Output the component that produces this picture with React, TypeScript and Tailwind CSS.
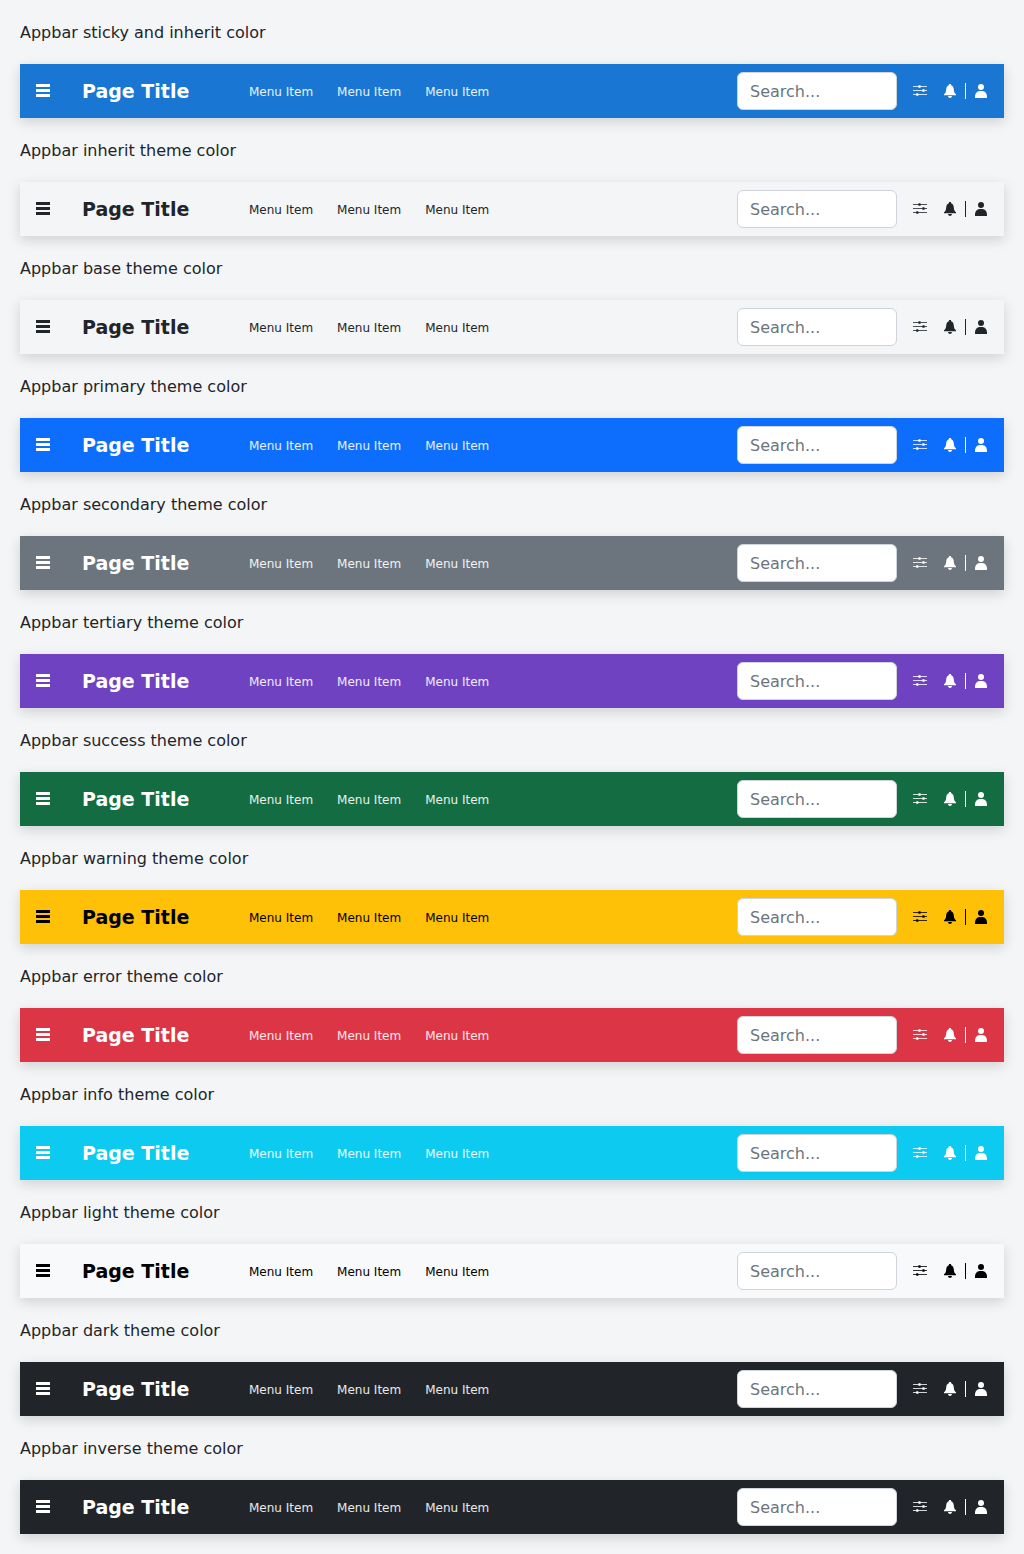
const bars = [
  { label: "Appbar sticky and inherit color", bar: "bg-[#1976d2]", text: "text-white", menu: "text-white/90" },
  { label: "Appbar inherit theme color", bar: "bg-[#f4f5f7]", text: "text-[#212529]", menu: "text-[#212529]" },
  { label: "Appbar base theme color", bar: "bg-[#f4f5f7]", text: "text-[#212529]", menu: "text-[#212529]" },
  { label: "Appbar primary theme color", bar: "bg-[#0d6efd]", text: "text-white", menu: "text-white/90" },
  { label: "Appbar secondary theme color", bar: "bg-[#6c757d]", text: "text-white", menu: "text-white/90" },
  { label: "Appbar tertiary theme color", bar: "bg-[#6f42c1]", text: "text-white", menu: "text-white/90" },
  { label: "Appbar success theme color", bar: "bg-[#146c43]", text: "text-white", menu: "text-white/90" },
  { label: "Appbar warning theme color", bar: "bg-[#ffc107]", text: "text-black", menu: "text-black" },
  { label: "Appbar error theme color", bar: "bg-[#dc3545]", text: "text-white", menu: "text-white/90" },
  { label: "Appbar info theme color", bar: "bg-[#0dcaf0]", text: "text-white", menu: "text-white/90" },
  { label: "Appbar light theme color", bar: "bg-[#f8f9fa]", text: "text-black", menu: "text-black" },
  { label: "Appbar dark theme color", bar: "bg-[#212529]", text: "text-white", menu: "text-white/90" },
  { label: "Appbar inverse theme color", bar: "bg-[#212529]", text: "text-white", menu: "text-white/90" },
];

function MenuIcon() {
  return (
    <svg width="14" height="14" viewBox="0 0 14 14" fill="currentColor">
      <rect x="0" y="0" width="14" height="3" />
      <rect x="0" y="5" width="14" height="3" />
      <rect x="0" y="10" width="14" height="3" />
    </svg>
  );
}

function SlidersIcon() {
  return (
    <svg width="14" height="14" viewBox="0 0 14 14" fill="currentColor">
      <rect x="0" y="2.100" width="14" height="0.800" />
      <rect x="0" y="6.100" width="14" height="0.800" />
      <rect x="0" y="10.100" width="14" height="0.800" />
      <rect x="5.400" y="1.200" width="2.200" height="2.600" rx="0.500" />
      <rect x="9.400" y="5.200" width="2.200" height="2.600" rx="0.500" />
      <rect x="3.200" y="9.200" width="2.200" height="2.600" rx="0.500" />
    </svg>
  );
}

function BellIcon() {
  return (
    <svg width="12" height="14" viewBox="0 0 12 14" fill="currentColor">
      <path d="M6 0C7 0 7.200.6 7.200 1.200 9 1.800 9.600 3.500 9.800 5.500 10 8 10.600 9.500 12 10.200V11.200H0V10.200C1.400 9.500 2 8 2.200 5.500 2.400 3.500 3 1.800 4.800 1.200 4.800.6 5 0 6 0z" />
      <path d="M4 12h4C7.800 13.300 7 14 6 14S4.200 13.300 4 12z" />
    </svg>
  );
}

function UserIcon() {
  return (
    <svg width="12" height="14" viewBox="0 0 12 14" fill="currentColor">
      <circle cx="6" cy="3" r="3" />
      <path d="M0 14V12.500C0 9.500 2 7.200 4.500 7h3C10 7.200 12 9.500 12 12.500V14z" />
    </svg>
  );
}

function Appbar({ bar, text, menu }: { bar: string; text: string; menu: string }) {
  return (
    <div className={`flex h-[54px] items-center pl-4 pr-[17px] shadow-[0_4px_12px_rgba(0,0,0,0.15)] ${bar} ${text}`}>
      <MenuIcon />
      <div className="ml-8 w-[167px] text-[19px] leading-6 font-bold">Page Title</div>
      <nav className={`flex gap-6 pt-[2px] text-xs ${menu}`}>
        <span>Menu Item</span>
        <span>Menu Item</span>
        <span>Menu Item</span>
      </nav>
      <input
        placeholder="Search..."
        className="ml-auto h-[38px] w-40 rounded-md border border-[#ced4da] bg-white px-3 text-base text-[#212529] placeholder:text-[#6c757d]"
      />
      <div className="ml-4 flex items-center">
        <SlidersIcon />
        <div className="ml-[17px]">
          <BellIcon />
        </div>
        <div className="mx-[9px] h-4 w-px bg-current" />
        <UserIcon />
      </div>
    </div>
  );
}

export default function App() {
  return (
    <div className="flex min-h-screen flex-col gap-5 bg-[#f4f5f7] p-5 font-['DejaVu_Sans',sans-serif] text-[#212529]">
      {bars.map((b) => (
        <div key={b.label} className="flex flex-col gap-5">
          <div className="h-6 text-base leading-[26px]">{b.label}</div>
          <Appbar bar={b.bar} text={b.text} menu={b.menu} />
        </div>
      ))}
    </div>
  );
}
